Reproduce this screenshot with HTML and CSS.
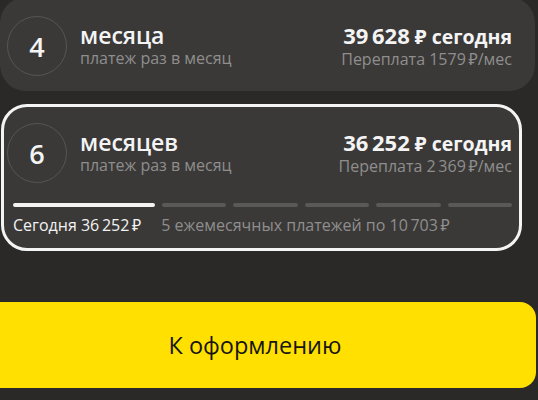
FILE: index.html
```html
<!DOCTYPE html>
<html lang="ru">
<head>
<meta charset="utf-8">
<link rel="stylesheet" href="styles.css">
</head>
<body>
<div class="screen">
  <div class="card card-plain">
    <div class="row">
      <div class="circle">4</div>
      <div class="info">
        <div class="title">месяца</div>
        <div class="sub">платеж раз в месяц</div>
      </div>
      <div class="price">
        <div class="amount"><span class="num">39&#8201;628</span> ₽ сегодня</div>
        <div class="sub">Переплата 1579&#8201;₽/мес</div>
      </div>
    </div>
  </div>

  <div class="card card-selected">
    <div class="row">
      <div class="circle">6</div>
      <div class="info">
        <div class="title">месяцев</div>
        <div class="sub">платеж раз в месяц</div>
      </div>
      <div class="price">
        <div class="amount"><span class="num">36&#8201;252</span> ₽ сегодня</div>
        <div class="sub">Переплата 2&#8201;369&#8201;₽/мес</div>
      </div>
    </div>
    <div class="schedule">
      <div class="bars">
        <span class="bar bar-on"></span>
        <span class="bar"></span>
        <span class="bar"></span>
        <span class="bar"></span>
        <span class="bar"></span>
        <span class="bar"></span>
      </div>
      <div class="legend">
        <span class="today">Сегодня 36&#8201;252&#8201;₽</span>
        <span class="rest">5 ежемесячных платежей по 10&#8201;703&#8201;₽</span>
      </div>
    </div>
  </div>

  <div class="cta">К оформлению</div>
</div>
</body>
</html>
```

FILE: styles.css
```css
html, body {
  margin: 0;
  padding: 0;
  background: #2a2928;
  overflow: hidden;
}

body {
  font-family: "Open Sans", "Noto Sans", "DejaVu Sans", sans-serif;
  color: #f2f2f2;
  width: 538px;
  height: 400px;
}

.screen {
  display: flex;
  flex-direction: column;
}

.card {
  background: #3a3938;
  border-radius: 26px;
}

.card-plain {
  margin-top: -3px;
  margin-right: 3px;
  padding: 19px 23px 15px 7px;
}

.card-selected {
  margin-top: 13px;
  margin-left: 1px;
  margin-right: 16px;
  border: 3px solid #f4f4f4;
  padding: 16px 7px 0 3px;
  box-sizing: border-box;
  height: 147px;
}

.row {
  display: flex;
  align-items: center;
}

.circle {
  width: 60px;
  height: 60px;
  box-sizing: border-box;
  border: 1.5px solid #565554;
  border-radius: 50%;
  display: flex;
  align-items: center;
  justify-content: center;
  font-size: 27px;
  font-weight: 600;
  color: #f4f4f4;
  flex: none;
}

.info {
  margin-left: 13px;
  flex: 1;
  display: flex;
  flex-direction: column;
}

.title {
  font-size: 23px;
  font-weight: 600;
  line-height: 25px;
  color: #f4f4f4;
}

.sub {
  font-size: 16px;
  line-height: 21px;
  color: #8f8e8d;
}

.price {
  display: flex;
  flex-direction: column;
  align-items: flex-end;
  text-align: right;
}

.amount {
  font-size: 19.5px;
  font-weight: 700;
  line-height: 25px;
  color: #f4f4f4;
}

.num {
  font-size: 22px;
}

.schedule {
  padding: 20px 0 0 6px;
  display: flex;
  flex-direction: column;
  gap: 8px;
}

.bars {
  display: grid;
  grid-template-columns: 142px repeat(5, 1fr);
  gap: 7px;
}

.bar {
  height: 4px;
  border-radius: 2px;
  background: #5a5958;
}

.bar-on {
  background: #f4f4f4;
}

.legend {
  display: flex;
  gap: 20px;
  font-size: 16px;
  line-height: 21px;
}

.today {
  color: #f2f2f2;
}

.rest {
  color: #8f8e8d;
}

.cta {
  margin-top: 51px;
  margin-left: -26px;
  margin-right: 2px;
  height: 86px;
  border-radius: 16px;
  background: #ffe000;
  color: #161514;
  font-size: 23.5px;
  font-weight: 500;
  display: flex;
  align-items: center;
  justify-content: center;
}
```
